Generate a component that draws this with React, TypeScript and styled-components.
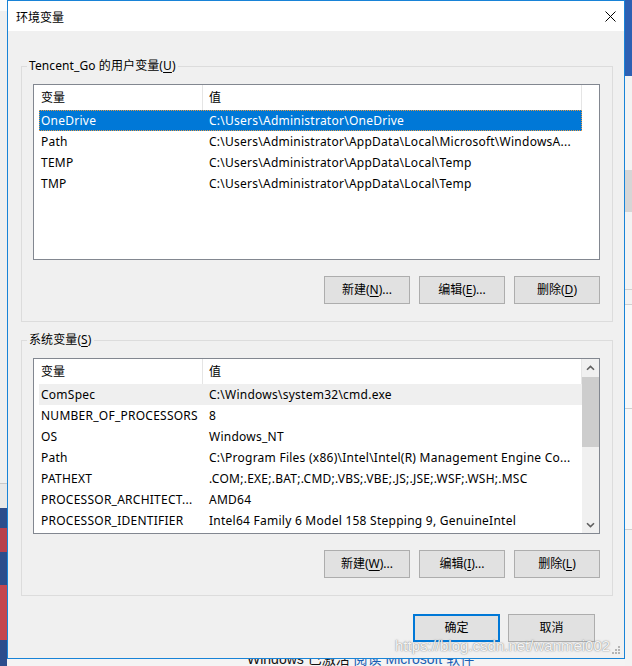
import React from "react";
import styled, { createGlobalStyle } from "styled-components";

const GlobalStyle = createGlobalStyle`
  html, body {
    margin: 0;
    padding: 0;
    background: #f0f0f0;
  }
  body {
    font-family: "Noto Sans", "Noto Sans CJK SC", sans-serif;
    font-size: 12px;
    color: #000;
  }
  * {
    box-sizing: border-box;
  }
`;

type EnvVar = { name: string; value: string };

const userVars: EnvVar[] = [
  { name: "OneDrive", value: "C:\\Users\\Administrator\\OneDrive" },
  {
    name: "Path",
    value: "C:\\Users\\Administrator\\AppData\\Local\\Microsoft\\WindowsA...",
  },
  { name: "TEMP", value: "C:\\Users\\Administrator\\AppData\\Local\\Temp" },
  { name: "TMP", value: "C:\\Users\\Administrator\\AppData\\Local\\Temp" },
];

const systemVars: EnvVar[] = [
  { name: "ComSpec", value: "C:\\Windows\\system32\\cmd.exe" },
  { name: "NUMBER_OF_PROCESSORS", value: "8" },
  { name: "OS", value: "Windows_NT" },
  {
    name: "Path",
    value: "C:\\Program Files (x86)\\Intel\\Intel(R) Management Engine Co...",
  },
  { name: "PATHEXT", value: ".COM;.EXE;.BAT;.CMD;.VBS;.VBE;.JS;.JSE;.WSF;.WSH;.MSC" },
  { name: "PROCESSOR_ARCHITECT...", value: "AMD64" },
  {
    name: "PROCESSOR_IDENTIFIER",
    value: "Intel64 Family 6 Model 158 Stepping 9, GenuineIntel",
  },
];

// little helpers
const Chevron = ({ down }: { down?: boolean }) => (
  <svg width="9" height="6" viewBox="0 0 9 6">
    <path
      d={down ? "M1 1.2 L4.5 4.6 L8 1.2" : "M1 4.8 L4.5 1.4 L8 4.8"}
      stroke="#606060"
      strokeWidth="1.6"
      fill="none"
    />
  </svg>
);

const CloseIcon = () => (
  <svg width="11" height="11" viewBox="0 0 11 11">
    <path d="M0.5 0.5 L10.5 10.5 M10.5 0.5 L0.5 10.5" stroke="#000" strokeWidth="1" />
  </svg>
);

const Grip = () => (
  <svg width="9" height="9" viewBox="0 0 9 9">
    <g fill="#b4b4b4">
      <rect x="6" y="0" width="2" height="2" />
      <rect x="3" y="3" width="2" height="2" />
      <rect x="6" y="3" width="2" height="2" />
      <rect x="0" y="6" width="2" height="2" />
      <rect x="3" y="6" width="2" height="2" />
      <rect x="6" y="6" width="2" height="2" />
    </g>
  </svg>
);

const VarList = ({
  rows,
  active,
  scroll,
}: {
  rows: EnvVar[];
  active?: { index: number; kind: "selected" | "soft" };
  scroll?: boolean;
}) => (
  <ListBox>
    <Table>
      <Header>
        <HeaderCell $w={169} $pad={7}>
          变量
        </HeaderCell>
        <HeaderCell $w={379} $pad={6}>
          值
        </HeaderCell>
      </Header>
      {rows.map((r, i) => (
        <Row key={r.name + i} $state={active && active.index === i ? active.kind : undefined}>
          <Cell>{r.name}</Cell>
          <Cell>{r.value}</Cell>
        </Row>
      ))}
    </Table>
    {scroll && (
      <ScrollBar>
        <ScrollArrow>
          <Chevron />
        </ScrollArrow>
        <Thumb />
        <ScrollSpacer />
        <ScrollArrow>
          <Chevron down />
        </ScrollArrow>
      </ScrollBar>
    )}
  </ListBox>
);

const App = () => {
  return (
    <>
      <GlobalStyle />
      <Desktop>
        <LeftStrip />
        <MainColumn>
          <Dialog>
            <TitleBar>
              <Title>环境变量</Title>
              <CloseBox>
                <CloseIcon />
              </CloseBox>
            </TitleBar>
            <Body>
              <Group>
                <Legend>
                  Tencent_Go 的用户变量(<Key>U</Key>)
                </Legend>
                <VarList rows={userVars} active={{ index: 0, kind: "selected" }} />
                <ButtonRow>
                  <Button $w={86}>
                    新建(<Key>N</Key>)...
                  </Button>
                  <Button $w={86}>
                    编辑(<Key>E</Key>)...
                  </Button>
                  <Button $w={86}>
                    删除(<Key>D</Key>)
                  </Button>
                </ButtonRow>
              </Group>

              <Group $top={10}>
                <Legend>
                  系统变量(<Key>S</Key>)
                </Legend>
                <VarList rows={systemVars} active={{ index: 0, kind: "soft" }} scroll />
                <ButtonRow>
                  <Button $w={86}>
                    新建(<Key>W</Key>)...
                  </Button>
                  <Button $w={86}>
                    编辑(<Key>I</Key>)...
                  </Button>
                  <Button $w={86}>
                    删除(<Key>L</Key>)
                  </Button>
                </ButtonRow>
              </Group>

              <Footer>
                <Button $w={87} $primary>
                  确定
                </Button>
                <Button $w={87}>取消</Button>
              </Footer>
            </Body>
            <GripBox>
              <Grip />
            </GripBox>
          </Dialog>
          <BottomStrip>
            <span>Windows 已激活 </span>
            <LinkText>阅读 Microsoft 软件</LinkText>
          </BottomStrip>
        </MainColumn>
        <RightStrip />
        <Watermark>https://blog.csdn.net/wanmei002</Watermark>
      </Desktop>
    </>
  );
};

export default App;

const Desktop = styled.div`
  position: relative;
  width: 632px;
  height: 666px;
  overflow: hidden;
  display: flex;
`;

const LeftStrip = styled.div`
  width: 7px;
  flex-shrink: 0;
  background: linear-gradient(
    to bottom,
    #fbfbfb 0,
    #fbfbfb 11px,
    #efefef 11px,
    #efefef 483px,
    #c9c9c9 483px,
    #c9c9c9 484px,
    #e8e8e8 484px,
    #e8e8e8 508px,
    #2c4d8c 508px,
    #2c4d8c 528px,
    #b8404c 528px,
    #b8404c 552px,
    #2c4d8c 552px,
    #2c4d8c 585px,
    #c4464f 585px,
    #c4464f 640px,
    #2c4d8c 640px
  );
`;

const RightStrip = styled.div`
  width: 7px;
  flex-shrink: 0;
  background: linear-gradient(
    to bottom,
    #2d60b3 0,
    #2d60b3 76px,
    #f3f3f3 76px,
    #f3f3f3 170px,
    #d6d6d6 170px,
    #d6d6d6 212px,
    #f3f3f3 212px,
    #f3f3f3 289px,
    #d0d0d0 289px,
    #d0d0d0 290px,
    #f3f3f3 290px,
    #f3f3f3 304px,
    #d0d0d0 304px,
    #d0d0d0 305px,
    #f8f8f8 305px,
    #f8f8f8 408px,
    #d0d0d0 408px,
    #d0d0d0 409px,
    #f8f8f8 409px,
    #f8f8f8 529px,
    #d0d0d0 529px,
    #d0d0d0 530px,
    #f3f3f3 530px
  );
`;

const MainColumn = styled.div`
  width: 618px;
  flex-shrink: 0;
  display: flex;
  flex-direction: column;
`;

const Dialog = styled.div`
  position: relative;
  width: 618px;
  height: 659px;
  border: 1px solid #1883d7;
  background: #f0f0f0;
  display: flex;
  flex-direction: column;
`;

const TitleBar = styled.div`
  height: 30px;
  background: #fff;
  display: flex;
  align-items: center;
  justify-content: space-between;
  padding: 0 8px 0 8px;
`;

const Title = styled.div`
  font-family: "Noto Sans CJK SC", sans-serif;
  font-size: 12px;
  line-height: 16px;
  padding-top: 1px;
`;

const CloseBox = styled.div`
  width: 11px;
  height: 11px;
  display: flex;
  margin-top: 1px;
`;

const Body = styled.div`
  flex: 1;
  display: flex;
  flex-direction: column;
  padding: 27px 11px 0 13px;
`;

const Group = styled.fieldset<{ $top?: number }>`
  margin: ${(p) => p.$top || 0}px 0 0 0;
  width: 592px;
  min-width: 0;
  border: 1px solid #dcdcdc;
  padding: 10px 12px 17px 11px;
`;

const Legend = styled.legend`
  margin-left: -6px;
  padding: 0 2px;
  font-size: 12px;
  line-height: 16px;
  letter-spacing: 0.1px;
  white-space: nowrap;
`;

const Key = styled.span`
  text-decoration: underline;
  text-underline-offset: 2px;
`;

const ListBox = styled.div`
  width: 567px;
  height: 176px;
  border: 1px solid #828790;
  background: #fff;
  display: flex;
  overflow: hidden;
`;

const Table = styled.div`
  width: 548px;
  flex-shrink: 0;
  display: flex;
  flex-direction: column;
`;

const Header = styled.div`
  display: flex;
  height: 25px;
  flex-shrink: 0;
`;

const HeaderCell = styled.div<{ $w: number; $pad: number }>`
  width: ${(p) => p.$w}px;
  padding-left: ${(p) => p.$pad}px;
  border-right: 1px solid #e5e5e5;
  line-height: 25px;
  white-space: nowrap;
`;

const Row = styled.div<{ $state?: "selected" | "soft" }>`
  margin-left: 5px;
  width: 543px;
  height: 21px;
  flex-shrink: 0;
  display: grid;
  grid-template-columns: 168px 1fr;
  line-height: 21px;
  background: ${(p) =>
    p.$state === "selected" ? "#0078d7" : p.$state === "soft" ? "#efefef" : "transparent"};
  color: ${(p) => (p.$state === "selected" ? "#fff" : "#000")};
  outline: ${(p) => (p.$state === "selected" ? "1px dotted #e59a45" : "none")};
  outline-offset: -1px;
`;

const Cell = styled.div`
  padding-left: 2px;
  letter-spacing: 0.25px;
  white-space: nowrap;
  overflow: hidden;
`;

const ScrollBar = styled.div`
  width: 17px;
  flex-shrink: 0;
  background: #f0f0f0;
  display: flex;
  flex-direction: column;
`;

const ScrollArrow = styled.div`
  height: 17px;
  flex-shrink: 0;
  display: flex;
  align-items: center;
  justify-content: center;
`;

const Thumb = styled.div`
  height: 70px;
  margin-top: 1px;
  background: #cdcdcd;
`;

const ScrollSpacer = styled.div`
  flex: 1;
`;

const ButtonRow = styled.div`
  display: flex;
  justify-content: flex-end;
  gap: 9px;
  margin-top: 16px;
  width: 567px;
`;

const Button = styled.button<{ $w: number; $primary?: boolean }>`
  width: ${(p) => p.$w}px;
  height: 28px;
  padding: 0;
  margin: 0;
  background: #e1e1e1;
  border: ${(p) => (p.$primary ? "2px solid #0078d7" : "1px solid #adadad")};
  font-family: "Noto Sans", "Noto Sans CJK SC", sans-serif;
  font-size: 12px;
  color: #000;
  line-height: 16px;
`;

const Footer = styled.div`
  display: flex;
  justify-content: flex-end;
  gap: 8px;
  margin-top: 18px;
  padding-right: 18px;
`;

const GripBox = styled.div`
  position: absolute;
  right: 3px;
  bottom: 3px;
  display: flex;
`;

const BottomStrip = styled.div`
  height: 7px;
  background: #f4f4f4;
  overflow: hidden;
  padding-left: 240px;
  white-space: nowrap;
  font-family: "Liberation Sans", "Noto Sans CJK SC", sans-serif;
  font-size: 14px;
  line-height: 14px;
  color: #111;

  span {
    position: relative;
    top: -7px;
  }
`;

const LinkText = styled.span`
  color: #1a5fb4;
`;

const Watermark = styled.div`
  position: absolute;
  left: 395px;
  top: 637px;
  font-family: "Liberation Sans", sans-serif;
  font-size: 15px;
  line-height: 18px;
  color: rgba(255, 255, 255, 0.92);
  text-shadow: 0 0 1px rgba(90, 90, 90, 0.7), 0 0 2px rgba(120, 120, 120, 0.5);
  pointer-events: none;
`;
